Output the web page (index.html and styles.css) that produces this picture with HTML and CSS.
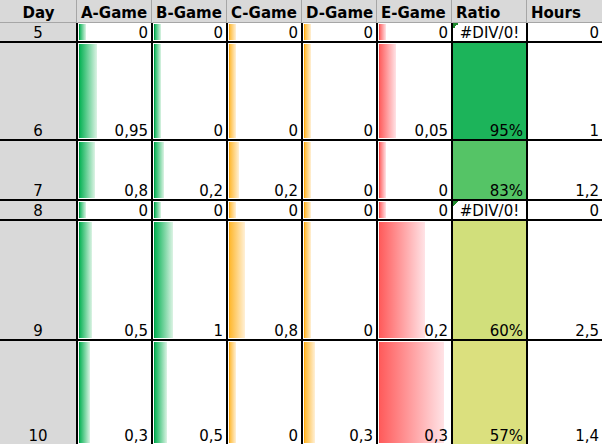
FILE: index.html
```html
<!DOCTYPE html>
<html>
<head>
<meta charset="utf-8">
<link rel="stylesheet" href="styles.css">
</head>
<body>
<div class="sheet">
  <div class="grid">
    <div class="hd center">Day</div>
    <div class="hd">A-Game</div>
    <div class="hd">B-Game</div>
    <div class="hd">C-Game</div>
    <div class="hd">D-Game</div>
    <div class="hd">E-Game</div>
    <div class="hd">Ratio</div>
    <div class="hd last">Hours</div>

    <div class="cell day">5</div>
    <div class="cell bar g" style="--w:7px">0</div>
    <div class="cell bar g" style="--w:7px">0</div>
    <div class="cell bar o" style="--w:7px">0</div>
    <div class="cell bar o" style="--w:7px">0</div>
    <div class="cell bar r" style="--w:7px">0</div>
    <div class="cell err">#DIV/0!</div>
    <div class="cell last">0</div>

    <div class="cell day">6</div>
    <div class="cell bar g" style="--w:18px">0,95</div>
    <div class="cell bar g" style="--w:7px">0</div>
    <div class="cell bar o" style="--w:7px">0</div>
    <div class="cell bar o" style="--w:7px">0</div>
    <div class="cell bar r" style="--w:17px">0,05</div>
    <div class="cell ratio r95">95%</div>
    <div class="cell last">1</div>

    <div class="cell day">7</div>
    <div class="cell bar g" style="--w:16px">0,8</div>
    <div class="cell bar g" style="--w:10px">0,2</div>
    <div class="cell bar o" style="--w:10px">0,2</div>
    <div class="cell bar o" style="--w:7px">0</div>
    <div class="cell bar r" style="--w:7px">0</div>
    <div class="cell ratio r83">83%</div>
    <div class="cell last">1,2</div>

    <div class="cell day">8</div>
    <div class="cell bar g" style="--w:7px">0</div>
    <div class="cell bar g" style="--w:7px">0</div>
    <div class="cell bar o" style="--w:7px">0</div>
    <div class="cell bar o" style="--w:7px">0</div>
    <div class="cell bar r" style="--w:7px">0</div>
    <div class="cell err">#DIV/0!</div>
    <div class="cell last">0</div>

    <div class="cell day">9</div>
    <div class="cell bar g" style="--w:13px">0,5</div>
    <div class="cell bar g" style="--w:19px">1</div>
    <div class="cell bar o" style="--w:16px">0,8</div>
    <div class="cell bar o" style="--w:7px">0</div>
    <div class="cell bar r" style="--w:46px">0,2</div>
    <div class="cell ratio r60">60%</div>
    <div class="cell last">2,5</div>

    <div class="cell day">10</div>
    <div class="cell bar g" style="--w:11px">0,3</div>
    <div class="cell bar g" style="--w:13px">0,5</div>
    <div class="cell bar o" style="--w:7px">0</div>
    <div class="cell bar o" style="--w:11px">0,3</div>
    <div class="cell bar r" style="--w:65px">0,3</div>
    <div class="cell ratio r57">57%</div>
    <div class="cell last">1,4</div>
  </div>
</div>
</body>
</html>
```

FILE: styles.css
```css
html, body {
  margin: 0;
  padding: 0;
  background: #ffffff;
  overflow: hidden;
}

.sheet {
  width: 602px;
  height: 444px;
  overflow: hidden;
  font-family: "DejaVu Sans", Verdana, sans-serif;
  font-size: 15px;
  color: #000;
}

.grid {
  display: grid;
  grid-template-columns: 78px 75px 75px 75px 75px 75px 75px 74px;
  grid-template-rows: 23px 20px 98px 60px 20px 120px 103px;
}

.hd {
  box-sizing: border-box;
  background: #d9d9d9;
  font-weight: bold;
  line-height: 16px;
  padding: 0 0 1px 3px;
  border-right: 1px solid #d9d9d9;
  border-bottom: 1px solid #a6a6a6;
  box-shadow: inset -1px 0 0 #a6a6a6;
  display: flex;
  align-items: flex-end;
  white-space: nowrap;
  overflow: hidden;
}

.hd.center {
  justify-content: center;
  padding-left: 0;
}

.hd.last {
  border-right: none;
  box-shadow: none;
}

.cell {
  box-sizing: border-box;
  background-color: #ffffff;
  border-right: 2px solid #000;
  border-bottom: 2px solid #000;
  line-height: 16px;
  padding: 0 3px 0 0;
  display: flex;
  align-items: flex-end;
  justify-content: flex-end;
  white-space: nowrap;
}

.grid > .cell:nth-last-child(-n+8) {
  border-bottom: none;
}

.cell.last {
  border-right: none;
}

.day {
  background-color: #d9d9d9;
  justify-content: center;
  padding: 0;
}

.bar {
  background-repeat: no-repeat, no-repeat;
  background-position: 1px 1px, 1px 1px;
  background-size: 1px calc(100% - 2px), var(--w) calc(100% - 2px);
}

.g {
  background-image: linear-gradient(#00a048, #00a048),
    linear-gradient(to right, #00b050, #dcf3e4);
}

.o {
  background-image: linear-gradient(#ffaa10, #ffaa10),
    linear-gradient(to right, #ffb628, #fff0d6);
}

.r {
  background-image: linear-gradient(#ff4d4d, #ff4d4d),
    linear-gradient(to right, #ff5a5a, #ffe3e6);
}

.err {
  justify-content: center;
  padding: 0;
  background-image: linear-gradient(135deg, #1f8a2e 50%, transparent 50%);
  background-repeat: no-repeat;
  background-position: 0 0;
  background-size: 6px 6px;
}

.r95 { background-color: #1cb45a; }
.r83 { background-color: #55c466; }
.r60 { background-color: #d1df7b; }
.r57 { background-color: #dbe07e; }
```
